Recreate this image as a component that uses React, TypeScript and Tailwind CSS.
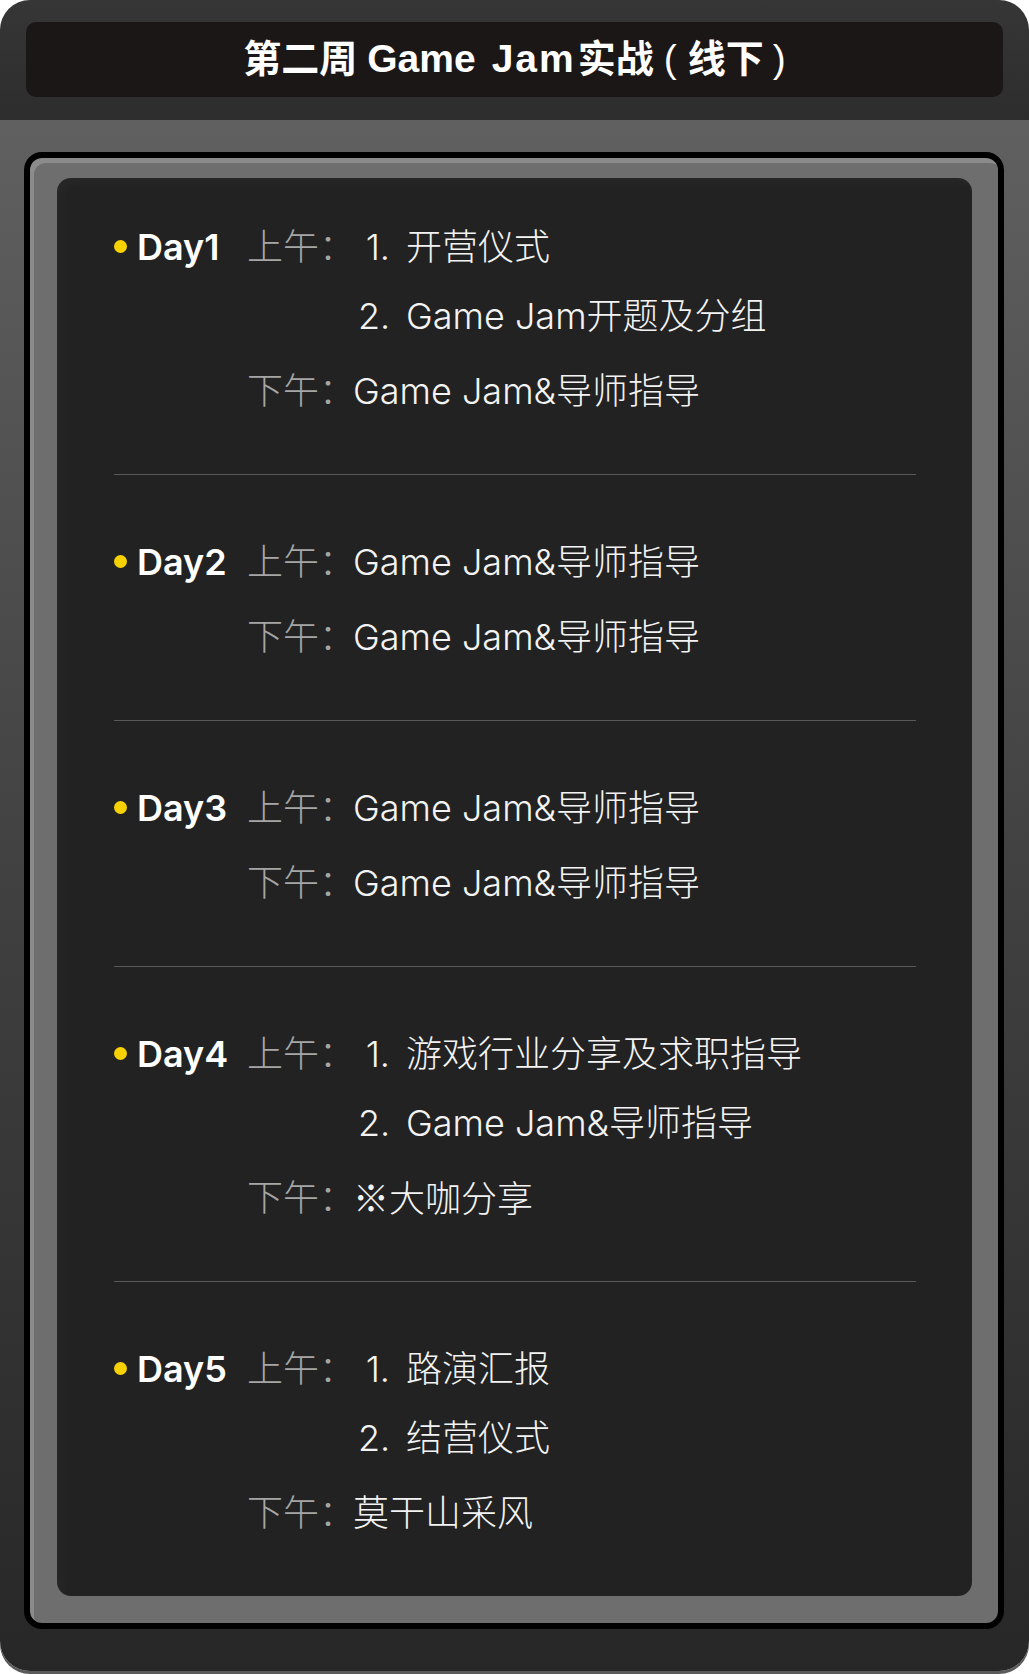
import React from "react";

type DayPlan = {
  day: string;
  am: string[];
  pm: React.ReactNode;
};

const refMark = <span className="font-['Noto_Sans_CJK_SC',sans-serif]">※</span>;

const days: DayPlan[] = [
  { day: "Day1", am: ["开营仪式", "Game Jam开题及分组"], pm: "Game Jam&导师指导" },
  { day: "Day2", am: ["Game Jam&导师指导"], pm: "Game Jam&导师指导" },
  { day: "Day3", am: ["Game Jam&导师指导"], pm: "Game Jam&导师指导" },
  {
    day: "Day4",
    am: ["游戏行业分享及求职指导", "Game Jam&导师指导"],
    pm: (
      <>
        {refMark}大咖分享
      </>
    ),
  },
  { day: "Day5", am: ["路演汇报", "结营仪式"], pm: "莫干山采风" },
];

const rowClass = "flex h-[69px] items-center";
const labelClass = "w-[106px] shrink-0 whitespace-nowrap text-[#a6a6a6]";
const contentClass = "whitespace-nowrap text-[#f3f3f3]";

function DayBlock({ plan, first }: { plan: DayPlan; first: boolean }) {
  const numbered = plan.am.length > 1;

  return (
    <div
      className={
        first
          ? "pt-[34px] pb-[49px]"
          : "border-t border-[#5a5a5a] pt-[52px] pb-[49px]"
      }
    >
      {plan.am.map((item, i) => (
        <div key={i} className={rowClass}>
          <div className="flex w-[133px] shrink-0 items-center">
            {i === 0 && (
              <>
                <span className="mr-[10px] h-[13px] w-[13px] rounded-full bg-[#f7d200]" />
                <span className="font-semibold text-white">{plan.day}</span>
              </>
            )}
          </div>
          <div className={labelClass}>{i === 0 ? "上午：" : ""}</div>
          <div className={contentClass}>
            {numbered ? (
              <span className="flex items-center pl-[5px]">
                <span className="w-[32px] shrink-0 text-right">{i + 1}.</span>
                <span className="ml-[16px]">{item}</span>
              </span>
            ) : (
              item
            )}
          </div>
        </div>
      ))}
      <div className={`${rowClass} mt-[6px]`}>
        <div className="w-[133px] shrink-0" />
        <div className={labelClass}>下午：</div>
        <div className={contentClass}>{plan.pm}</div>
      </div>
    </div>
  );
}

export default function App() {
  return (
    <div className="h-[1674px] w-[1029px] bg-white">
      <div className="h-[1671px] overflow-hidden rounded-[30px] shadow-[0_3px_0_#5b5b5b]">
        <header className="h-[120px] bg-linear-to-b from-[#363636] to-[#2d2d2d] px-[26px] pt-[22px]">
          <div className="flex h-[75px] items-center justify-center rounded-[10px] bg-[#1b1717] font-['Liberation_Sans','Noto_Sans_CJK_SC',sans-serif] text-[38px] font-bold whitespace-nowrap text-white">
            <span>第二周</span>
            <span className="ml-[10px] text-[39px]">Game</span>
            <span className="ml-[16px] text-[39px] tracking-[2px]">Jam</span>
            <span className="ml-[2px]">实战</span>
            <span className="ml-[10px] mr-[11px] text-[39px] font-normal">(</span>
            <span>线下</span>
            <span className="ml-[9px] text-[39px] font-normal">)</span>
          </div>
        </header>

        <div className="h-[1551px] bg-linear-to-b from-[#606060] via-[#404040] to-[#272727] pt-[32px] pr-[25px] pl-[24px]">
          <div className="rounded-[18px] border-[6px] border-black bg-[#6e6e6e] pt-[20px] pr-[26px] pb-[27px] pl-[27px] shadow-[inset_4px_5px_0_#8b8b8b]">
            <div className="rounded-[14px] bg-[#222222] pr-[56px] pl-[57px] font-['Inter','Noto_Sans_CJK_SC',sans-serif] text-[36px] leading-none font-light shadow-[inset_6px_6px_8px_rgba(255,255,255,0.025)]">
              {days.map((plan, i) => (
                <DayBlock key={plan.day} plan={plan} first={i === 0} />
              ))}
            </div>
          </div>
        </div>
      </div>
    </div>
  );
}
